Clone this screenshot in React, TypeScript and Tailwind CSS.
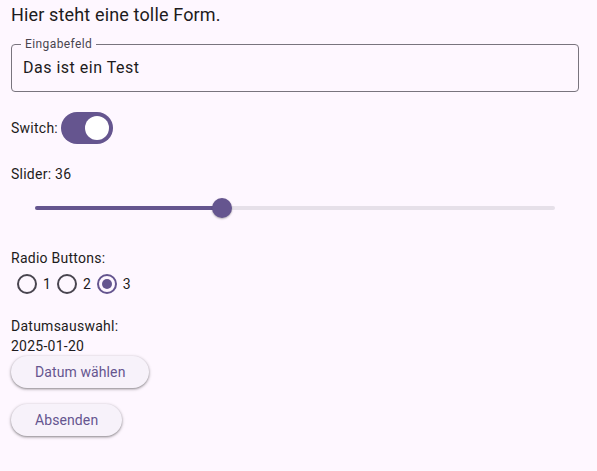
import React from "react";

function Radio({ checked, label }: { checked: boolean; label: string }) {
  return (
    <div className="flex items-center">
      <div className="w-[32px] h-[32px] flex items-center justify-center">
        {checked ? (
          <div className="w-[20px] h-[20px] rounded-full border-2 border-[#65558f] flex items-center justify-center">
            <div className="w-[10px] h-[10px] rounded-full bg-[#65558f]" />
          </div>
        ) : (
          <div className="w-[20px] h-[20px] rounded-full border-2 border-[#49454f]" />
        )}
      </div>
      <span className="text-[14px] leading-[20px] text-[#1d1b20]">{label}</span>
    </div>
  );
}

export default function App() {
  const value = 36;
  return (
    <div
      className="min-h-[471px] bg-[#fef7ff] pl-[11px] pr-[18px] pt-[3px] text-[#1d1b20]"
      style={{ fontFamily: "Roboto, 'Noto Sans', sans-serif" }}
    >
      <div className="text-[18px] leading-[24px] tracking-[0.15px]">Hier steht eine tolle Form.</div>

      <div className="relative mt-[17px] h-[48px] rounded-[4px] border border-[#79747e] flex items-center pl-[11px]">
        <span className="absolute -top-[9px] left-[9px] px-[4px] bg-[#fef7ff] text-[12px] leading-[16px] text-[#49454f] tracking-[0.4px]">
          Eingabefeld
        </span>
        <span className="text-[16px] leading-[24px] tracking-[0.5px]">Das ist ein Test</span>
      </div>

      <div className="mt-[20px] flex items-center h-[32px]">
        <span className="text-[14px] leading-[20px] tracking-[0.25px]">Switch:</span>
        <div className="ml-[3px] w-[52px] h-[32px] rounded-full bg-[#65558f] flex items-center justify-end pr-[4px]">
          <div className="w-[24px] h-[24px] rounded-full bg-white" />
        </div>
      </div>

      <div className="mt-[20px] text-[14px] leading-[20px] tracking-[0.25px]">Slider: {value}</div>

      <div className="h-[48px] px-[24px] flex items-center">
        <div className="relative w-full h-[4px] rounded-full bg-[#e6e0e9]">
          <div
            className="absolute left-0 top-0 h-[4px] rounded-full bg-[#65558f]"
            style={{ width: `${value}%` }}
          />
          <div
            className="absolute top-1/2 w-[20px] h-[20px] -ml-[10px] -mt-[10px] rounded-full bg-[#65558f] shadow-[0_1px_2px_rgba(0,0,0,0.3)]"
            style={{ left: `${value}%` }}
          />
        </div>
      </div>

      <div className="mt-[16px] text-[14px] leading-[20px] tracking-[0.25px]">Radio Buttons:</div>
      <div className="flex items-center">
        <Radio checked={false} label="1" />
        <Radio checked={false} label="2" />
        <Radio checked={true} label="3" />
      </div>

      <div className="mt-[16px] text-[14px] leading-[20px] tracking-[0.25px]">Datumsauswahl:</div>
      <div className="text-[14px] leading-[20px] tracking-[0.25px]">2025-01-20</div>

      <div className="flex flex-col items-start">
        <button className="h-[32px] px-[24px] rounded-full bg-[#f7f2fa] text-[#65558f] text-[14px] font-normal tracking-[0.1px] shadow-[0_1px_2px_rgba(0,0,0,0.3),0_1px_3px_1px_rgba(0,0,0,0.15)]">
          Datum wählen
        </button>
        <button className="mt-[16px] h-[32px] px-[24px] rounded-full bg-[#f7f2fa] text-[#65558f] text-[14px] font-normal tracking-[0.1px] shadow-[0_1px_2px_rgba(0,0,0,0.3),0_1px_3px_1px_rgba(0,0,0,0.15)]">
          Absenden
        </button>
      </div>
    </div>
  );
}
